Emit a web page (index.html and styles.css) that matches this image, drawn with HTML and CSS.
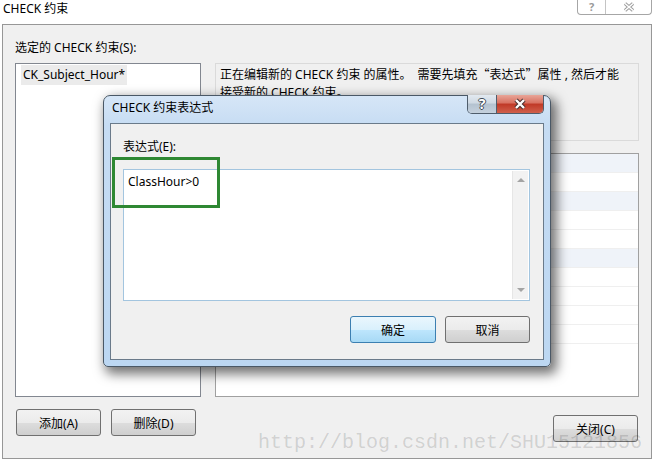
FILE: index.html
```html
<!DOCTYPE html>
<html lang="zh-CN">
<head>
    <meta charset="UTF-8">
    <title>CHECK 约束</title>
    <link rel="stylesheet" href="styles.css">
</head>
<body>
<div class="window">
    <div class="titlebar">
        <span class="title">CHECK 约束</span>
        <div class="caption">
            <span class="cap-btn cap-help">?</span>
            <span class="cap-btn cap-close">
                <svg width="14" height="10" viewBox="0 0 14 10">
                    <path d="M3 1.5 L11 8.5 M11 1.5 L3 8.5" stroke="#9a9a9a" stroke-width="3.4" fill="none"/>
                    <path d="M3 1.5 L11 8.5 M11 1.5 L3 8.5" stroke="#fff" stroke-width="1.6" fill="none"/>
                </svg>
            </span>
        </div>
    </div>

    <div class="panel">
        <div class="panel-label">选定的 CHECK 约束(S):</div>
        <div class="main">
            <div class="listbox">
                <span class="list-item">CK_Subject_Hour*</span>
            </div>
            <div class="right-col">
                <div class="desc">正在编辑新的 CHECK 约束 的属性。　需要先填充<span class="cjk">“表达式”</span>属性 , 然后才能<br>接受新的 CHECK 约束。</div>
                <div class="props">
                    <div class="prop-row shade"></div>
                    <div class="prop-row"></div>
                    <div class="prop-row shade"></div>
                    <div class="prop-row"></div>
                    <div class="prop-row"></div>
                    <div class="prop-row shade"></div>
                    <div class="prop-row"></div>
                    <div class="prop-row"></div>
                    <div class="prop-row"></div>
                    <div class="prop-row"></div>
                </div>
            </div>
        </div>
        <div class="bottom">
            <button class="btn">添加(A)</button>
            <button class="btn">删除(D)</button>
            <button class="btn btn-close">关闭(C)</button>
        </div>
    </div>

    <div class="watermark">http://blog.csdn.net/SHU15121856</div>

    <div class="dialog">
        <div class="dlg-title">CHECK 约束表达式</div>
        <div class="dlg-caption">
            <span class="dcap dcap-help">?</span>
            <span class="dcap dcap-close">
                <svg width="18" height="12" viewBox="0 0 18 12">
                    <path d="M5 2 L13 10 M13 2 L5 10" stroke="#4a3030" stroke-width="4.4" fill="none"/>
                    <path d="M5 2 L13 10 M13 2 L5 10" stroke="#fff" stroke-width="2.4" fill="none"/>
                </svg>
            </span>
        </div>
        <div class="dlg-body">
            <div class="dlg-label">表达式(E):</div>
            <div class="expr">
                <div class="expr-text">ClassHour&gt;0</div>
                <div class="scrollbar">
                    <span class="arrow-up"></span>
                    <span class="arrow-down"></span>
                </div>
            </div>
            <div class="dlg-buttons">
                <button class="btn btn-default">确定</button>
                <button class="btn">取消</button>
            </div>
        </div>
    </div>

    <div class="highlight"></div>
</div>
</body>
</html>
```

FILE: styles.css
```css
body {
    margin: 0;
    background: #fff;
    font-family: "Noto Sans", "Noto Sans CJK SC", sans-serif;
    font-size: 12px;
    color: #000;
}
.window {
    position: relative;
    width: 655px;
    height: 462px;
    overflow: hidden;
}
.titlebar {
    height: 24px;
    display: flex;
    justify-content: space-between;
    align-items: flex-start;
    padding-left: 3px;
}
.title { line-height: 18px; }
.caption {
    display: flex;
    margin-right: 3px;
    height: 14px;
    border: 1px solid #a6a6a6;
    border-top: none;
    border-radius: 0 0 4px 4px;
}
.cap-btn {
    display: flex;
    align-items: center;
    justify-content: center;
}
.cap-help {
    width: 27px;
    border-right: 1px solid #c4c4c4;
    color: #9a9a9a;
    font-weight: bold;
    font-size: 11px;
    line-height: 14px;
}
.cap-close { width: 45px; }

.panel {
    margin-left: 2px;
    width: 650px;
    height: 435px;
    box-sizing: border-box;
    border: 1px solid #979797;
    background: #f0f0f0;
    padding: 0 12px;
}
.panel-label {
    height: 38px;
    box-sizing: border-box;
    padding-top: 15px;
    line-height: 16px;
}
.main {
    display: flex;
    gap: 14px;
    height: 334px;
}
.listbox {
    width: 186px;
    box-sizing: border-box;
    border: 1px solid #828790;
    background: #fff;
}
.list-item {
    display: inline-block;
    margin: 1px 0 0 5px;
    padding: 0 2px;
    line-height: 20px;
    background: #ebebeb;
}
.right-col {
    flex: 1;
    display: flex;
    flex-direction: column;
    gap: 12px;
}
.desc {
    height: 78px;
    box-sizing: border-box;
    border: 1px solid #dadada;
    padding: 1px 4px;
    line-height: 18px;
    white-space: nowrap;
    overflow: hidden;
}
.cjk { font-family: "Noto Sans CJK SC", sans-serif; }
.props {
    flex: 1;
    border: 1px solid #a0a0a0;
    background: #fff;
}
.prop-row {
    height: 18px;
    border-bottom: 1px solid #efefef;
}
.prop-row.shade { background: #eff3f9; }

.bottom {
    display: flex;
    align-items: flex-start;
    gap: 10px;
    margin-top: 12px;
    padding: 0 1px;
}
.btn {
    width: 85px;
    height: 27px;
    border: 1px solid #707070;
    border-radius: 3px;
    background: linear-gradient(#f2f2f2 0%, #ebebeb 50%, #dddddd 51%, #cfcfcf 100%);
    font-family: inherit;
    font-size: 12px;
    color: #000;
    padding: 0;
}
.btn-close {
    margin-left: auto;
    margin-top: 6px;
}
.btn-default {
    border-color: #3c7fb1;
    background: linear-gradient(#eaf6fd 0%, #d9f0fc 50%, #bee6fd 51%, #a7d9f5 100%);
}

.watermark {
    position: absolute;
    left: 258px;
    top: 430px;
    font-family: "Liberation Mono", monospace;
    font-size: 20px;
    line-height: 26px;
    color: rgba(0, 0, 0, 0.15);
    white-space: nowrap;
}

.dialog {
    position: absolute;
    left: 103px;
    top: 95px;
    width: 448px;
    height: 272px;
    box-sizing: border-box;
    border: 1px solid #4a5866;
    border-radius: 7px 7px 5px 5px;
    background: linear-gradient(#d6e6f7 0px, #c6dcf3 30px, #bcd7f2 100%);
    box-shadow: 4px 5px 12px 2px rgba(0, 0, 0, 0.55);
    padding: 0 6px 6px;
}
.dlg-title {
    height: 27px;
    line-height: 24px;
    padding-left: 2px;
}
.dlg-caption {
    position: absolute;
    top: -1px;
    right: 6px;
    display: flex;
    height: 18px;
    border: 1px solid #4f5d6c;
    border-top: none;
    border-radius: 0 0 5px 5px;
    overflow: hidden;
}
.dcap {
    display: flex;
    align-items: center;
    justify-content: center;
}
.dcap-help {
    width: 28px;
    border-right: 1px solid #4f5d6c;
    background: linear-gradient(#e2e9f0 0%, #cfd9e3 45%, #b4c2d0 50%, #c5d1dd 100%);
    color: #fff;
    font-weight: bold;
    font-size: 14px;
    line-height: 14px;
    text-shadow: 1px 0 #3e4a56, -1px 0 #3e4a56, 0 1px #3e4a56, 0 -1px #3e4a56;
}
.dcap-close {
    width: 46px;
    background: linear-gradient(#e8a598 0%, #d87060 45%, #c03826 50%, #d0604c 100%);
}
.dlg-body {
    height: 237px;
    box-sizing: border-box;
    border: 1px solid #6a7a8a;
    background: #f0f0f0;
    padding: 0 13px 0 12px;
}
.dlg-label {
    padding-top: 15px;
    line-height: 16px;
}
.expr {
    position: relative;
    margin-top: 14px;
    height: 132px;
    box-sizing: border-box;
    border: 1px solid #a3c5df;
    background: #fff;
}
.expr-text {
    padding: 3px 4px;
    line-height: 18px;
}
.scrollbar {
    position: absolute;
    top: 1px;
    right: 1px;
    bottom: 1px;
    width: 15px;
    background: #f2f2f2;
    border-left: 1px solid #e6e6e6;
}
.arrow-up, .arrow-down {
    position: absolute;
    left: 4px;
    width: 0;
    height: 0;
    border-left: 4px solid transparent;
    border-right: 4px solid transparent;
}
.arrow-up {
    top: 7px;
    border-bottom: 4px solid #a4a4a4;
}
.arrow-down {
    bottom: 7px;
    border-top: 4px solid #a4a4a4;
}
.dlg-buttons {
    display: flex;
    justify-content: flex-end;
    gap: 9px;
    margin-top: 15px;
}
.dlg-buttons .btn-default { width: 86px; }

.highlight {
    position: absolute;
    left: 112px;
    top: 157px;
    width: 108px;
    height: 51px;
    box-sizing: border-box;
    border: 3px solid #2e8833;
}
```
